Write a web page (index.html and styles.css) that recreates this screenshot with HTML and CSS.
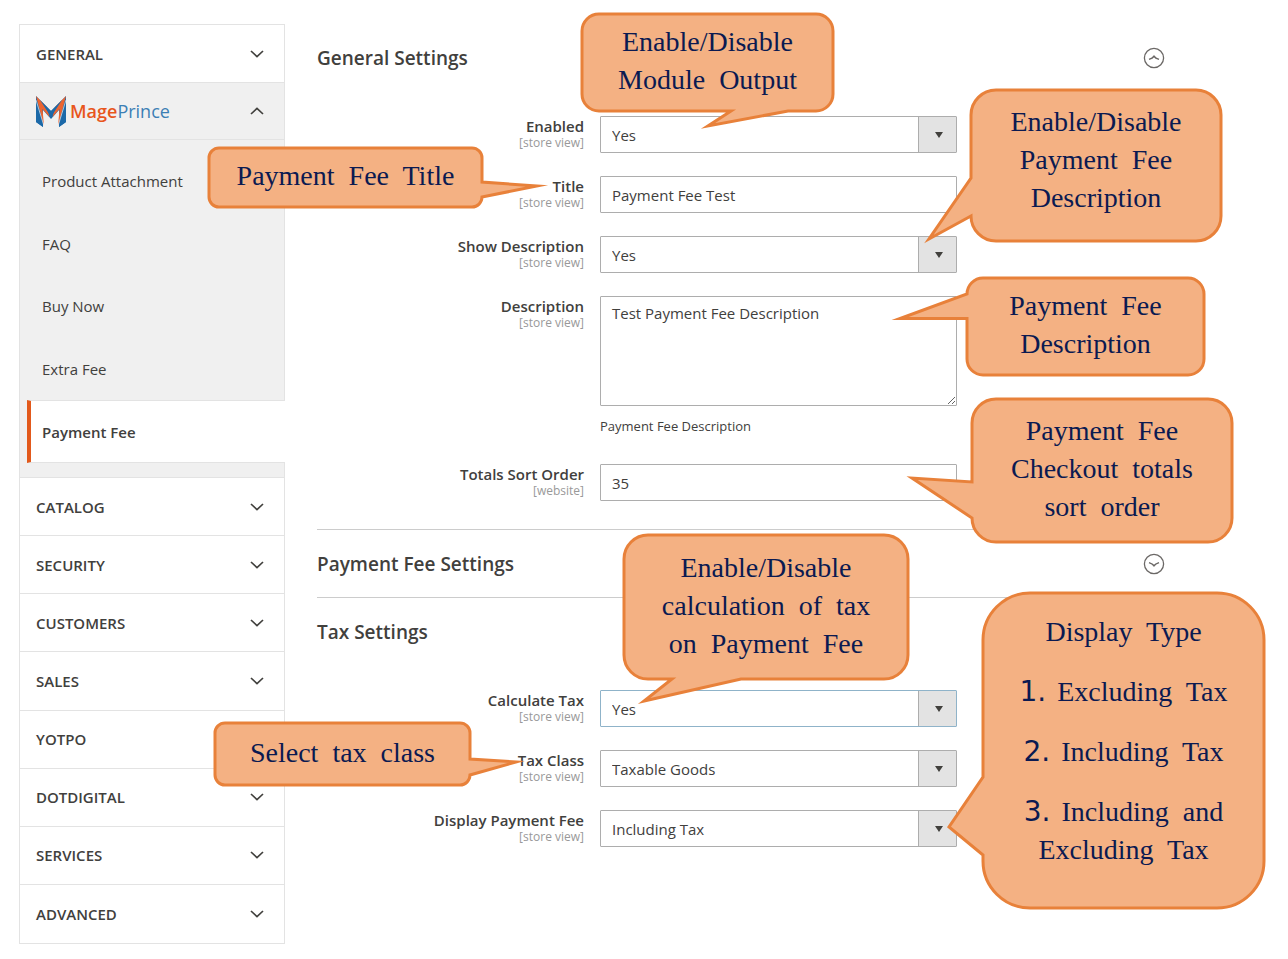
FILE: index.html
```html
<!DOCTYPE html>
<html lang="en">
<head>
<meta charset="utf-8">
<title>Payment Fee Configuration</title>
<link rel="stylesheet" href="styles.css">
</head>
<body>
<svg class="sprite" aria-hidden="true">
  <symbol id="chevron" viewBox="0 0 14 8"><path d="M1 1l6 5.6L13 1" fill="none" stroke="#41403d" stroke-width="1.7"/></symbol>
  <symbol id="circle-chevron" viewBox="0 0 22 22"><circle cx="11" cy="11" r="9.6" fill="none" stroke="#6b6866" stroke-width="1.3"/><path d="M6 9.600q3.600 1.200 5 3.200q1.400-2 5-3.200" fill="none" stroke="#6b6866" stroke-width="1.5"/></symbol>
</svg>
<div class="page">
  <nav class="sidebar" aria-label="Configuration">
    <button class="tab" type="button">GENERAL<svg class="chevron"><use href="#chevron"/></svg></button>
    <section class="group">
      <button class="tab tab-brand" type="button">
        <span class="brand">
          <svg class="brand-mark" viewBox="0 0 30 31" aria-hidden="true">
            <path d="M0 0L15 15 30 0V26L23 31V14L15 23 7 14V31L0 26z" fill="#1c69a8"/>
            <path d="M0 0L11 11 13.500 21 6.500 13 8 30z" fill="#ec6430"/>
            <path d="M30 0L19 11 16.500 21 23.500 13 22 30z" fill="#ec6430"/>
            <path d="M4 4L12 12 15 15 18 12 26 4 15 21z" fill="#1c69a8"/>
            <path d="M0 6L7 31 0 26zM30 6L23 31 30 26z" fill="#1c69a8"/>
            <path d="M0 4L8 30M30 4L22 30" stroke="#f0f0f0" stroke-width=".7"/>
          </svg>
          <span class="brand-name"><b>Mage</b>Prince</span>
        </span>
        <svg class="chevron chevron-up"><use href="#chevron"/></svg>
      </button>
      <ul class="links">
        <li><a href="#attachment">Product Attachment</a></li>
        <li><a href="#faq">FAQ</a></li>
        <li><a href="#buy-now">Buy Now</a></li>
        <li><a href="#extra-fee">Extra Fee</a></li>
        <li><a class="active" href="#payment-fee" aria-current="page">Payment Fee</a></li>
      </ul>
    </section>
    <div class="tabs">
      <button class="tab" type="button">CATALOG<svg class="chevron"><use href="#chevron"/></svg></button>
      <button class="tab" type="button">SECURITY<svg class="chevron"><use href="#chevron"/></svg></button>
      <button class="tab" type="button">CUSTOMERS<svg class="chevron"><use href="#chevron"/></svg></button>
      <button class="tab" type="button">SALES<svg class="chevron"><use href="#chevron"/></svg></button>
      <button class="tab" type="button">YOTPO<svg class="chevron"><use href="#chevron"/></svg></button>
      <button class="tab" type="button">DOTDIGITAL<svg class="chevron"><use href="#chevron"/></svg></button>
      <button class="tab" type="button">SERVICES<svg class="chevron"><use href="#chevron"/></svg></button>
      <button class="tab" type="button">ADVANCED<svg class="chevron"><use href="#chevron"/></svg></button>
    </div>
  </nav>

  <main class="content">
    <section class="settings">
      <h2><button class="heading" type="button">General Settings<svg class="circle circle-up"><use href="#circle-chevron"/></svg></button></h2>
      <div class="fields">
        <div class="field">
          <label for="enabled">Enabled<span class="scope">[store view]</span></label>
          <div class="select"><select id="enabled"><option>Yes</option><option>No</option></select></div>
        </div>
        <div class="field">
          <label for="title">Title<span class="scope">[store view]</span></label>
          <input id="title" type="text" value="Payment Fee Test">
        </div>
        <div class="field">
          <label for="show">Show Description<span class="scope">[store view]</span></label>
          <div class="select"><select id="show"><option>Yes</option><option>No</option></select></div>
        </div>
        <div class="field">
          <label for="description">Description<span class="scope">[store view]</span></label>
          <div class="stack">
            <textarea id="description" aria-describedby="note">Test Payment Fee Description</textarea>
            <p class="note" id="note">Payment Fee Description</p>
          </div>
        </div>
        <div class="field">
          <label for="sort">Totals Sort Order<span class="scope">[website]</span></label>
          <input id="sort" type="text" value="35">
        </div>
      </div>
    </section>
    <section class="settings">
      <h2><button class="heading" type="button">Payment Fee Settings<svg class="circle"><use href="#circle-chevron"/></svg></button></h2>
    </section>
    <section class="settings">
      <h2><button class="heading" type="button">Tax Settings<svg class="circle circle-up"><use href="#circle-chevron"/></svg></button></h2>
      <div class="fields">
        <div class="field">
          <label for="calc">Calculate Tax<span class="scope">[store view]</span></label>
          <div class="select focused"><select id="calc"><option>Yes</option><option>No</option></select></div>
        </div>
        <div class="field">
          <label for="class">Tax Class<span class="scope">[store view]</span></label>
          <div class="select"><select id="class"><option>Taxable Goods</option></select></div>
        </div>
        <div class="field">
          <label for="display">Display Payment Fee<span class="scope">[store view]</span></label>
          <div class="select"><select id="display"><option>Including Tax</option><option>Excluding Tax</option></select></div>
        </div>
      </div>
    </section>
  </main>

  <aside class="callout callout-enabled">
    <svg class="bubble" aria-hidden="true"><path d="M17 0H234A17 17 0 0 1 251 17V80A17 17 0 0 1 234 97H206L126 112 149 97H17A17 17 0 0 1 0 80V17A17 17 0 0 1 17 0z"/></svg>
    <p>Enable/Disable
Module  Output</p>
  </aside>
  <aside class="callout callout-title">
    <svg class="bubble" aria-hidden="true"><path d="M10 0H263A10 10 0 0 1 273 10V34L328 38 273 49A10 10 0 0 1 263 59H10A10 10 0 0 1 0 49V10A10 10 0 0 1 10 0z"/></svg>
    <p>Payment  Fee  Title</p>
  </aside>
  <aside class="callout callout-show">
    <svg class="bubble" aria-hidden="true"><path d="M25 0H225A25 25 0 0 1 250 25V126A25 25 0 0 1 225 151H25A25 25 0 0 1 0 126L-42 149 0 88V25A25 25 0 0 1 25 0z"/></svg>
    <p>Enable/Disable
Payment  Fee
Description</p>
  </aside>
  <aside class="callout callout-description">
    <svg class="bubble" aria-hidden="true"><path d="M16 0H221A16 16 0 0 1 237 16V81A16 16 0 0 1 221 97H16A16 16 0 0 1 0 81V40.500H-67L0 16A16 16 0 0 1 16 0z"/></svg>
    <p>Payment  Fee
Description</p>
  </aside>
  <aside class="callout callout-sort">
    <svg class="bubble" aria-hidden="true"><path d="M24 0H236A24 24 0 0 1 260 24V119A24 24 0 0 1 236 143H24A24 24 0 0 1 0 119L-60 79 0 83V24A24 24 0 0 1 24 0z"/></svg>
    <p>Payment  Fee
Checkout  totals
sort  order</p>
  </aside>
  <aside class="callout callout-calc">
    <svg class="bubble" aria-hidden="true"><path d="M24 0H260A24 24 0 0 1 284 24V120A24 24 0 0 1 260 144H117L20 166 48 144H24A24 24 0 0 1 0 120V24A24 24 0 0 1 24 0z"/></svg>
    <p>Enable/Disable
calculation  of  tax
on  Payment  Fee</p>
  </aside>
  <aside class="callout callout-class">
    <svg class="bubble" aria-hidden="true"><path d="M10 0H245A10 10 0 0 1 255 10V36L301 39 255 52A10 10 0 0 1 245 62H10A10 10 0 0 1 0 52V10A10 10 0 0 1 10 0z"/></svg>
    <p>Select  tax  class</p>
  </aside>
  <aside class="callout callout-display">
    <svg class="bubble" aria-hidden="true"><path d="M47 0H234A47 47 0 0 1 281 47V268A47 47 0 0 1 234 315H47A47 47 0 0 1 0 268V262L-34 234 0 184V47A47 47 0 0 1 47 0z"/></svg>
    <p>Display  Type</p>
    <ol>
      <li><span class="num">1.</span>Excluding  Tax</li>
      <li><span class="num">2.</span>Including  Tax</li>
      <li><span class="num">3.</span><span>Including  and</span><br><span>Excluding  Tax</span></li>
    </ol>
  </aside>
</div>
</body>
</html>
```

FILE: styles.css
```css
* { box-sizing: border-box; }

body {
  margin: 0;
  background: #fff;
  color: #41403d;
  font: 15px/20px "Open Sans", "Noto Sans", sans-serif;
}

h2, p, ol, ul { margin: 0; padding: 0; }
button, input, select, textarea { font: inherit; color: inherit; }
.sprite { display: none; }

.page {
  position: relative;
  display: flex;
  align-items: flex-start;
  gap: 32px;
  padding: 24px 123px 15px 19px;
}

/* Sidebar */
.sidebar {
  flex: 0 0 266px;
  border: 1px solid #e3e3e3;
}
.tab {
  display: flex;
  align-items: center;
  justify-content: space-between;
  width: 100%;
  min-height: 58px;
  padding: 0 20px 0 16px;
  border: 0;
  border-bottom: 1px solid #e3e3e3;
  background: #fff;
  font-weight: 600;
  text-align: left;
}
.chevron { width: 14px; height: 8px; }
.chevron-up, .circle-up { transform: rotate(180deg); }
.group {
  padding-bottom: 14px;
  border-bottom: 1px solid #e3e3e3;
  background: #f0f0f0;
}
.tab-brand { min-height: 57px; background: #f0f0f0; }
.brand { display: flex; align-items: center; gap: 4px; }
.brand-mark { width: 30px; height: 31px; }
.brand-name { color: #3c7fb5; font-size: 18px; font-weight: 400; }
.brand-name b { color: #e8561c; font-weight: 600; }

.links {
  display: grid;
  grid-auto-rows: 1fr;
  min-height: 313px;
  margin: 10px -1px 0 7px;
  list-style: none;
}
.links a {
  display: flex;
  align-items: center;
  height: 100%;
  padding-left: 15px;
  color: inherit;
  text-decoration: none;
}
.links .active {
  padding-left: 11px;
  border: solid #e3e3e3;
  border-width: 1px 0;
  border-left: 4px solid #e2591b;
  background: #fff;
  font-weight: 600;
}
.tabs {
  display: grid;
  grid-auto-rows: 1fr;
  min-height: 465px;
}
.tabs .tab:last-child { border-bottom: 0; }

/* Settings */
.content { flex: 1; min-width: 0; }
.settings { padding-bottom: 28px; border-bottom: 1px solid #ccc; }
.settings + .settings { padding-bottom: 0; }
.settings:last-child { border-bottom: 0; }
.heading {
  display: flex;
  align-items: center;
  justify-content: space-between;
  width: 100%;
  min-height: 67px;
  padding: 0;
  border: 0;
  background: none;
  font-size: 19px;
  font-weight: 600;
  text-align: left;
}
.circle { width: 22px; height: 22px; }
.fields { display: grid; gap: 23px; padding-top: 25px; }
.field {
  display: grid;
  grid-template-columns: minmax(0, 267fr) minmax(0, 357fr) minmax(0, 192fr);
  column-gap: 16px;
  align-items: start;
}
.field label { font-weight: 600; text-align: right; }
.scope {
  display: block;
  color: #999;
  font-size: 12px;
  font-weight: 400;
  line-height: 14px;
}
input, select, textarea {
  display: block;
  width: 100%;
  height: 37px;
  padding: 0 11px;
  border: 1px solid #adadad;
  border-radius: 1px;
  background: #fff;
}
select { appearance: none; }
.select { position: relative; }
.select::before {
  content: "";
  position: absolute;
  inset: 1px 1px 1px auto;
  width: 37px;
  border-left: 1px solid #adadad;
  background: #e3e3e3;
  pointer-events: none;
}
.select::after {
  content: "";
  position: absolute;
  top: 16px;
  right: 14px;
  border: solid transparent;
  border-width: 6px 4px 0;
  border-top-color: #41403d;
  pointer-events: none;
}
.focused select { border-color: #8fb3c9; }
textarea { height: 110px; padding: 6px 11px; resize: both; }
.note { padding: 10px 0 5px; font-size: 13px; }

/* Annotation bubbles */
.callout {
  position: absolute;
  display: flex;
  flex-direction: column;
  align-items: center;
  justify-content: center;
  gap: 22px;
  padding-bottom: 3px;
  color: #0b1a51;
  font: 28px/38px "Liberation Serif", serif;
  text-align: center;
  white-space: pre;
}
.callout p, .callout ol { position: relative; }
.callout ol { display: grid; gap: 22px; list-style: none; white-space: normal; }
.callout li { white-space: pre; }
.num { margin-right: 11px; font-family: "DejaVu Sans", sans-serif; line-height: 1; }
.bubble {
  position: absolute;
  inset: 0;
  width: 100%;
  height: 100%;
  overflow: visible;
  fill: #f4b183;
  stroke: #e8813a;
  stroke-width: 3px;
  stroke-miterlimit: 20;
}
.callout-enabled { left: 582px; top: 14px; width: 251px; height: 97px; }
.callout-title { left: 209px; top: 148px; width: 273px; height: 59px; }
.callout-show { left: 971px; top: 90px; width: 250px; height: 151px; padding-bottom: 12px; }
.callout-description { left: 967px; top: 278px; width: 237px; height: 97px; }
.callout-sort { left: 972px; top: 399px; width: 260px; height: 143px; }
.callout-calc { left: 624px; top: 535px; width: 284px; height: 144px; }
.callout-class { left: 215px; top: 723px; width: 255px; height: 62px; }
.callout-display { left: 983px; top: 593px; width: 281px; height: 315px; padding-bottom: 20px; }
```
